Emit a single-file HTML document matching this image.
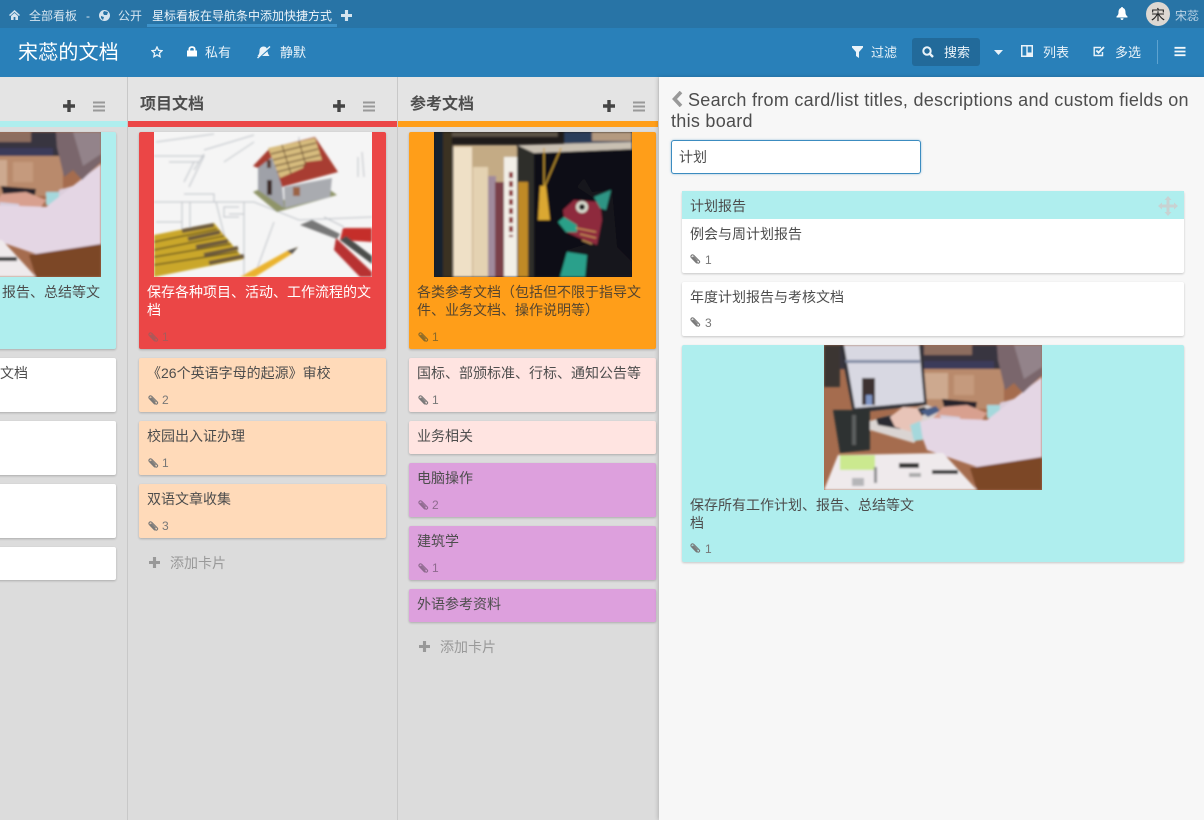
<!DOCTYPE html>
<html><head><meta charset="utf-8"><style>
*{box-sizing:border-box}
html,body{margin:0;padding:0;width:1204px;height:820px;overflow:hidden;background:#dcdcdc;font-family:"Liberation Sans","Noto Sans CJK SC",sans-serif;font-size:14px;color:#4d4d4d}
.a{position:absolute}
.t{position:absolute;white-space:nowrap}
.c{position:absolute;width:247px;border-radius:2px;box-shadow:0 1px 2px rgba(0,0,0,.22)}
.c .x{position:absolute;left:8px;top:6px;line-height:18px;font-size:14px;width:232px}
.c .b{position:absolute;left:8px;bottom:4px;font-size:12px;line-height:16px;color:#777;display:flex;align-items:center}
.b svg{margin-right:3px}
svg{display:block}
.w{color:#fff}
</style></head><body>
<svg width="0" height="0" style="position:absolute"><defs>
<filter id="bl" x="-5%" y="-5%" width="110%" height="110%"><feGaussianBlur stdDeviation="1"/></filter>
<symbol id="clip" viewBox="0 0 12 12"><path d="M7.800 10.200 2.400 4.600C1 3 3.200.9 4.800 2.400L10.300 8C11.300 9.200 9.600 10.900 8.400 9.800L3.900 5C3.300 4.400 4.100 3.600 4.800 4.200L8.600 8.200" fill="none" stroke="currentColor" stroke-width="1.100"/></symbol>
<symbol id="plus" viewBox="0 0 12 12"><path d="M4.300 0h3.400v4.300H12v3.400H7.700V12H4.300V7.700H0V4.300h4.300z" fill="currentColor"/></symbol>
<symbol id="bars" viewBox="0 0 12 12"><path d="M0 1h12v2H0zM0 5h12v2H0zM0 9h12v2H0z" fill="currentColor"/></symbol>
<symbol id="lap" viewBox="0 0 218 145">
<rect width="218" height="145" fill="#a56c4e"/>
<g filter="url(#bl)">
<rect x="96" y="24" width="84" height="40" fill="#b98a6c"/>
<rect x="100" y="28" width="24" height="26" fill="#cda98f"/>
<rect x="130" y="30" width="20" height="20" fill="#c59a7d"/>
<rect x="0" y="0" width="218" height="24" fill="#37343f"/>
<rect x="100" y="0" width="48" height="10" fill="#8d6d5e"/>
<rect x="100" y="16" width="70" height="8" fill="#3a3a5a"/>
<rect x="0" y="0" width="16" height="42" fill="#3b3533"/>
<path d="M16 0H98L103 60 29 68Z" fill="#333238"/>
<path d="M20 0H95L100 57 31 63Z" fill="#d8d8e2"/>
<path d="M21 15H96V18H22Z" fill="#8089a3"/>
<rect x="38" y="33" width="13" height="27" fill="#3c3033"/>
<rect x="42" y="50" width="6" height="10" fill="#7f94c5"/>
<path d="M46 76 103 60 118 66 90 98 46 85Z" fill="#dad4d2"/>
<path d="M52 74 100 62 106 66 76 84 54 80Z" fill="#2c2a30"/>
<path d="M96 66 112 61 116 66 104 72Z" fill="#4c5e88"/>
<path d="M118 54 153 57 152 63 120 62Z" fill="#26232a"/>
<path d="M66 72 79 62 93 63 99 73 88 87 71 82Z" fill="#e8c4b8"/>
<path d="M176 58 203 50 218 40V60L176 72Z" fill="#dccedc"/>
<rect x="163" y="60" width="13" height="13" fill="#a5d8dc"/>
<path d="M109 73 119 62 143 60 163 68 156 78 136 78Z" fill="#d8a08f"/>
<path d="M116 70 136 72 136 77 118 78Z" fill="#d5cddc"/>
<path d="M93 78 109 73 163 75 218 32V112L156 123 103 105Z" fill="#e4d6e4"/>
<path d="M86 80 96 76 99 95 90 96Z" fill="#a5d8dc"/>
<path d="M173 0H218V30L199 48 190 38 181 45 174 15Z" fill="#7a666c"/>
<path d="M190 0H218V22L200 34Z" fill="#93838a"/>
<path d="M9 65H38L46 63 46 105 16 108Z" fill="#2f3031"/>
<rect x="28" y="70" width="4" height="30" fill="#5b5f5e"/>
<path d="M146 123 218 112V145H153Z" fill="#7c4628"/>
<path d="M14 110 119 108 153 145H0Z" fill="#efeaec"/>
<rect x="16" y="110" width="35" height="15" fill="#cbe98f"/>
<rect x="75" y="118" width="20" height="5" fill="#333"/>
<rect x="108" y="125" width="26" height="4" fill="#333"/>
<rect x="28" y="133" width="12" height="8" fill="#b5b5b8"/>
<rect x="50" y="122" width="3" height="16" fill="#8d8d90"/>
<rect x="85" y="128" width="12" height="4" fill="#aaa"/>
</g></symbol>
</defs></svg>

<!-- top bar -->
<div class="a" style="left:0;top:0;width:1204px;height:28px;background:#2874a6"></div>
<div class="a" style="left:0;top:28px;width:1204px;height:49px;background:#2980b9"></div>
<svg class="a" style="left:9px;top:10px" width="11" height="10" viewBox="0 0 11 10"><path d="M5.500 0 11 5 10 6 5.500 2 1 6 0 5ZM2 6 5.500 3 9 6V10H6.400V7H4.600V10H2Z" fill="#d5e4ef"/></svg>
<div class="t" style="left:29px;top:8px;font-size:12px;line-height:16px;color:#d5e4ef">全部看板</div>
<div class="t" style="left:86px;top:8px;font-size:12px;line-height:16px;color:#d5e4ef">-</div>
<svg class="a" style="left:99px;top:10px" width="11" height="11" viewBox="0 0 11 11"><circle cx="5.500" cy="5.500" r="5.500" fill="#d5e4ef"/><path d="M5 1 9 2 8 5 5 5 4 3ZM2 6 5 7 4 10 2 8Z" fill="#2874a6"/></svg>
<div class="t" style="left:118px;top:8px;font-size:12px;line-height:16px;color:#d5e4ef">公开</div>
<div class="t" style="left:152px;top:8px;font-size:12px;line-height:16px;color:#eef5fa">星标看板在导航条中添加快捷方式</div>
<div class="a" style="left:147px;top:24px;width:190px;height:3px;background:#3d92c9"></div>
<svg class="a" style="left:341px;top:10px;color:#d5e4ef" width="11" height="11"><use href="#plus"/></svg>
<svg class="a" style="left:1116px;top:7px" width="12" height="13" viewBox="0 0 12 13"><path d="M6 0C7 0 7 1 7 1 9 1.500 9.500 3.500 9.500 5.500 9.500 8 11 9 11.500 9.500V10.500H.5V9.500C1 9 2.500 8 2.500 5.500 2.500 3.500 3 1.500 5 1 5 1 5 0 6 0ZM4.500 11.200H7.500C7.500 12.200 6.800 13 6 13S4.500 12.200 4.500 11.200Z" fill="#fff"/></svg>
<div class="a" style="left:1146px;top:2px;width:24px;height:24px;border-radius:50%;background:#ddd8d2"></div>
<div class="t" style="left:1150px;top:6px;width:16px;text-align:center;font-size:14px;line-height:18px;color:#222">宋</div>
<div class="t" style="left:1175px;top:8px;font-size:12px;line-height:16px;color:#bcd4e6">宋蕊</div>

<!-- header -->
<div class="t" style="left:18px;top:40px;font-size:20px;line-height:26px;color:#fff;letter-spacing:.2px">宋蕊的文档</div>
<svg class="a" style="left:151px;top:46px" width="12" height="12" viewBox="0 0 12 12"><path d="M6 1 7.500 4.300 11 4.700 8.400 7.100 9.100 10.700 6 8.900 2.900 10.700 3.600 7.100 1 4.700 4.500 4.300Z" fill="none" stroke="#eaf3f9" stroke-width="1.300"/></svg>
<svg class="a" style="left:187px;top:46px" width="10" height="11" viewBox="0 0 10 11"><path d="M0 4.500H1.500V3C1.500-.6 8.500-.6 8.500 3V4.500H10V10.500H0ZM3.200 4.500H6.800V3.100C6.800 1.400 3.200 1.400 3.200 3.100Z" fill="#fff" fill-rule="evenodd"/></svg>
<div class="t" style="left:205px;top:44px;font-size:13px;line-height:18px;color:#eaf3f9">私有</div>
<svg class="a" style="left:256px;top:45px" width="15" height="14" viewBox="0 0 15 14"><path d="M7.500 1.500C10 1.500 11 3 11 5L4 11H1.500C3 9.500 3.500 8 3.500 5.500 3.500 3 5.500 1.500 7.500 1.500ZM11.500 6.200C11.700 8 12.300 9.500 13.500 11H6ZM13.500 1 14.500 2 2 13.500 1 12.500Z" fill="#eaf3f9"/></svg>
<div class="t" style="left:280px;top:44px;font-size:13px;line-height:18px;color:#eaf3f9">静默</div>

<svg class="a" style="left:852px;top:46px" width="11" height="12" viewBox="0 0 11 12"><path d="M0 0H11V1.500L7 6V12L4 10V6L0 1.500Z" fill="#eaf3f9"/></svg>
<div class="t" style="left:871px;top:44px;font-size:13px;line-height:18px;color:#eaf3f9">过滤</div>
<div class="a" style="left:912px;top:38px;width:68px;height:28px;border-radius:3px;background:#226a9a"></div>
<svg class="a" style="left:922px;top:46px" width="12" height="12" viewBox="0 0 12 12"><circle cx="5" cy="5" r="3.700" fill="none" stroke="#eaf3f9" stroke-width="2"/><path d="M7.500 7.500 11 11" stroke="#eaf3f9" stroke-width="2.400"/></svg>
<div class="t" style="left:944px;top:44px;font-size:13px;line-height:18px;color:#eaf3f9">搜索</div>
<svg class="a" style="left:994px;top:50px" width="9" height="5" viewBox="0 0 9 5"><path d="M0 0H9L4.500 5Z" fill="#eaf3f9"/></svg>
<svg class="a" style="left:1021px;top:45px" width="12" height="12" viewBox="0 0 12 12"><path d="M0 0H12V12H0ZM1.500 1.500V10.500H5.300V1.500ZM6.700 1.500V7.500H10.500V1.500Z" fill="#eaf3f9" fill-rule="evenodd"/></svg>
<div class="t" style="left:1043px;top:44px;font-size:13px;line-height:18px;color:#eaf3f9">列表</div>
<svg class="a" style="left:1093px;top:46px" width="12" height="11" viewBox="0 0 12 11"><path d="M9.500 6V9.500H1.200V1.500H8" fill="none" stroke="#eaf3f9" stroke-width="1.400"/><path d="M3.300 4.500 5.500 6.700 11 1" fill="none" stroke="#eaf3f9" stroke-width="1.900"/></svg>
<div class="t" style="left:1115px;top:44px;font-size:13px;line-height:18px;color:#eaf3f9">多选</div>
<div class="a" style="left:1157px;top:40px;width:1px;height:24px;background:#5ea3d0"></div>
<svg class="a" style="left:1174px;top:46px;color:#f3f8fb" width="12" height="11"><use href="#bars"/></svg>

<!-- lists backgrounds -->
<div class="a" style="left:0;top:77px;width:658px;height:44px;background:#e4e4e4"></div>
<div class="a" style="left:127px;top:77px;width:1px;height:743px;background:#c8c8c8"></div>
<div class="a" style="left:397px;top:77px;width:1px;height:743px;background:#c8c8c8"></div>
<div class="a" style="left:0;top:121px;width:127px;height:6px;background:#afeeee"></div>
<div class="a" style="left:128px;top:121px;width:269px;height:6px;background:#eb4646"></div>
<div class="a" style="left:398px;top:121px;width:260px;height:6px;background:#ff9e19"></div>

<div class="t" style="left:140px;top:94px;font-size:16px;line-height:22px;font-weight:bold;color:#4d4d4d">项目文档</div>
<div class="t" style="left:410px;top:94px;font-size:16px;line-height:22px;font-weight:bold;color:#4d4d4d">参考文档</div>
<svg class="a" style="left:63px;top:100px;color:#444" width="12" height="12"><use href="#plus"/></svg>
<svg class="a" style="left:93px;top:100px;color:#999" width="12" height="13"><use href="#bars"/></svg>
<svg class="a" style="left:333px;top:100px;color:#444" width="12" height="12"><use href="#plus"/></svg>
<svg class="a" style="left:363px;top:100px;color:#999" width="12" height="13"><use href="#bars"/></svg>
<svg class="a" style="left:603px;top:100px;color:#444" width="12" height="12"><use href="#plus"/></svg>
<svg class="a" style="left:633px;top:100px;color:#999" width="12" height="13"><use href="#bars"/></svg>

<!-- list 1 -->
<div class="a" style="left:0;top:127px;width:127px;height:693px;overflow:hidden">
<div class="c" style="left:-131px;top:5px;height:217px;background:#afeeee"></div>
<svg class="a" style="left:-117px;top:5px" width="218" height="145"><use href="#lap"/></svg>
<div class="t" style="left:2px;top:156px;line-height:18px">报告、总结等文</div>
<div class="c" style="left:-131px;top:231px;height:54px;background:#fff"></div>
<div class="t" style="left:0;top:237px;line-height:18px">文档</div>
<div class="c" style="left:-131px;top:294px;height:54px;background:#fff"></div>
<div class="c" style="left:-131px;top:357px;height:54px;background:#fff"></div>
<div class="c" style="left:-131px;top:420px;height:33px;background:#fff"></div>
</div>

<!-- list 2 -->
<div class="c" style="left:139px;top:132px;height:217px;background:#eb4646">
<svg class="a" style="left:15px;top:0" width="218" height="145" viewBox="0 0 218 145">
<rect width="218" height="145" fill="#f5f5f5"/>
<g filter="url(#bl)">
<g fill="none" stroke="#bfc3c8" stroke-width="1">
<path d="M0 24H50L35 55M0 70H100L145 88 218 85M30 62H60V70M28 70V122M36 70V115M62 70 75 122M75 82H90M90 70V145M120 90 100 145M2 10 60 2M50 18 100 3M70 30 100 10M204 25V45M208 20 210 45M2 90H28M170 85 190 95"/>
<path d="M40 30 30 50M50 22 40 38M15 30H45M145 5V25M85 75H70V85H85"/>
</g>
<path d="M99 60 123 80 183 63 176 58 130 68 108 56Z" fill="#8f9468"/>
<path d="M104 35 116 18 128 53 130 76 104 58Z" fill="#9fa1a8"/>
<path d="M130 55 178 46 176 65 131 76Z" fill="#a9abb0"/>
<path d="M99 34 116 16 118 25 104 36Z" fill="#a83e32"/>
<path d="M116 16 161 5 184 40 128 55Z" fill="#a83e32"/>
<path d="M114 16 161 6 168 28 151 30 149 36 126 46Z" fill="#d7bc7e"/>
<path d="M117 22 162 11M119 28 164 17M121 34 166 23M123 40 150 33" stroke="#6f5536" stroke-width="1.300"/>
<path d="M128 13 137 42M145 9 152 34" stroke="#6f5536"/>
<rect x="113" y="28" width="4" height="8" fill="#5a3d35"/><rect x="113" y="48" width="5" height="15" fill="#3c2b28"/>
<rect x="139" y="55" width="7" height="9" fill="#9b6345"/>
<path d="M0 103 60 91 90 127 0 145Z" fill="#caa72a"/>
<path d="M0 110 63 97M0 118 70 104M0 125 77 112M0 133 84 120" stroke="#4f4324" stroke-width="1.300"/>
<path d="M28 99 60 93M34 107 66 100M42 115 74 109M50 123 84 116M55 131 90 124" stroke="#6d5a3a" stroke-width="4"/>
<path d="M86 145 133 119 144 115 139 121 101 145Z" fill="#eab32f"/>
<path d="M133 119 144 115 138 122Z" fill="#555"/>
<path d="M146 93 158 88 186 102 183 107Z" fill="#777"/>
<path d="M189 96 218 96V110L186 108Z" fill="#c52f2c"/>
<path d="M182 106 218 140V145H206L180 118Z" fill="#b83030"/>
<path d="M186 108 218 132V124L192 104Z" fill="#4b4d4c"/>
</g></svg>
<div class="x w" style="top:151px;line-height:18px">保存各种项目、活动、工作流程的文档</div>
<div class="b" style="color:#a85a5a"><svg width="12" height="12"><use href="#clip"/></svg>1</div></div>

<div class="c" style="left:139px;top:358px;height:54px;background:#ffdab9"><div class="x">《26个英语字母的起源》审校</div><div class="b"><svg width="12" height="12"><use href="#clip"/></svg>2</div></div>
<div class="c" style="left:139px;top:421px;height:54px;background:#ffdab9"><div class="x">校园出入证办理</div><div class="b"><svg width="12" height="12"><use href="#clip"/></svg>1</div></div>
<div class="c" style="left:139px;top:484px;height:54px;background:#ffdab9"><div class="x">双语文章收集</div><div class="b"><svg width="12" height="12"><use href="#clip"/></svg>3</div></div>
<svg class="a" style="left:149px;top:557px;color:#999" width="11" height="11"><use href="#plus"/></svg>
<div class="t" style="left:170px;top:554px;line-height:18px;color:#999">添加卡片</div>

<!-- list 3 -->
<div class="c" style="left:409px;top:132px;height:217px;background:#ff9e19">
<svg class="a" style="left:25px;top:0" width="198" height="145" viewBox="0 0 198 145">
<rect width="198" height="145" fill="#1f1b1a"/>
<g filter="url(#bl)">
<rect x="130" width="68" height="12" fill="#2a3c5a"/><rect x="158" width="40" height="9" fill="#b49a80"/>
<rect x="14" width="110" height="5" fill="#5c5347"/>
<rect x="0" width="9" height="145" fill="#18202e"/>
<rect x="9" y="0" width="9" height="145" fill="#3a3020"/>
<rect x="19" y="13" width="64" height="132" fill="#c4ab85"/>
<rect x="19" y="15" width="19" height="130" fill="#efe0c6"/>
<rect x="39" y="35" width="15" height="110" fill="#e4d2b2"/>
<rect x="54" y="44" width="8" height="101" fill="#a08a9c"/>
<rect x="61" y="50" width="9" height="95" fill="#7a3f4a"/>
<rect x="70" y="25" width="13" height="120" fill="#f2efe7"/>
<path d="M77 40V105" stroke="#8e2b33" stroke-width="4" stroke-dasharray="6 3"/>
<rect x="83" y="15" width="115" height="130" fill="#0e0d12"/>
<rect x="83" y="15" width="17" height="130" fill="#2f2f2b"/>
<path d="M83 13 198 10V17L100 21Z" fill="#c9c0b2"/>
<rect x="84" y="50" width="10" height="95" fill="#c08a26"/>
<path d="M110 16V56L127 16" fill="none" stroke="#cfa030" stroke-width="1.200"/>
<path d="M104 88 106 54 112 54 116 88Z" fill="#dba832"/>
<path d="M143 55 150 46 158 60 178 58 183 115 198 130V145H127L133 118 160 110 166 70Z" fill="#17171d"/>
<path d="M129 78 140 68 166 70 168 88 163 113 150 108 132 100Z" fill="#8e2a3e"/>
<path d="M124 90 130 85 143 93 143 100 132 100Z" fill="#2aa088"/>
<circle cx="148" cy="75" r="6" fill="#d8dccf"/><circle cx="148" cy="75" r="3" fill="#121212"/>
<path d="M160 65 177 58 172 78 166 76Z" fill="#2f9584"/>
<path d="M133 120 153 123 151 145H126Z" fill="#2aa08b"/>
<path d="M142 96 162 100M146 102 162 106M148 108 158 112" stroke="#d8a85c"/>
</g></svg>
<div class="x" style="top:151px;line-height:18px;color:#55452f">各类参考文档（包括但不限于指导文件、业务文档、操作说明等）</div>
<div class="b" style="color:#8a6a2a"><svg width="12" height="12"><use href="#clip"/></svg>1</div></div>

<div class="c" style="left:409px;top:358px;height:54px;background:#ffe4e1"><div class="x">国标、部颁标准、行标、通知公告等</div><div class="b"><svg width="12" height="12"><use href="#clip"/></svg>1</div></div>
<div class="c" style="left:409px;top:421px;height:33px;background:#ffe4e1"><div class="x">业务相关</div></div>
<div class="c" style="left:409px;top:463px;height:54px;background:#dda0dd"><div class="x">电脑操作</div><div class="b" style="color:#8e6a8e"><svg width="12" height="12"><use href="#clip"/></svg>2</div></div>
<div class="c" style="left:409px;top:526px;height:54px;background:#dda0dd"><div class="x">建筑学</div><div class="b" style="color:#8e6a8e"><svg width="12" height="12"><use href="#clip"/></svg>1</div></div>
<div class="c" style="left:409px;top:589px;height:33px;background:#dda0dd"><div class="x">外语参考资料</div></div>
<svg class="a" style="left:419px;top:641px;color:#999" width="11" height="11"><use href="#plus"/></svg>
<div class="t" style="left:440px;top:638px;line-height:18px;color:#999">添加卡片</div>

<!-- sidebar -->
<div class="a" style="left:659px;top:77px;width:545px;height:743px;background:#f7f7f7;box-shadow:-1px 0 4px rgba(0,0,0,.18)"></div>
<svg class="a" style="left:672px;top:91px" width="12" height="16" viewBox="0 0 12 16"><path d="M9 1 2.500 8 9 15" fill="none" stroke="#999" stroke-width="3.600"/></svg>
<div class="a" style="left:671px;top:90px;width:525px;font-size:18px;line-height:21px;color:#4d4d4d;text-indent:17px;letter-spacing:.28px">Search from card/list titles, descriptions and custom fields on this board</div>
<div class="a" style="left:671px;top:140px;width:250px;height:34px;background:#fff;border:1px solid #3c8cc0;border-radius:3px;box-shadow:0 0 2px rgba(60,140,192,.5)"></div>
<div class="t" style="left:679px;top:148px;line-height:18px;font-size:14px">计划</div>

<div class="a" style="left:682px;top:191px;width:502px;height:82px;background:#fff;border-radius:2px;box-shadow:0 1px 2px rgba(0,0,0,.2)"></div>
<div class="a" style="left:682px;top:191px;width:502px;height:28px;background:#afeeee"></div>
<div class="t" style="left:690px;top:197px;line-height:18px">计划报告</div>
<svg class="a" style="left:1158px;top:196px" width="20" height="20" viewBox="0 0 20 20"><path d="M10 0 13.500 4H11.500V8.500H16V6.500L20 10 16 13.500V11.500H11.500V16H13.500L10 20 6.500 16H8.500V11.500H4V13.500L0 10 4 6.500V8.500H8.500V4H6.500Z" fill="#c8d2d2"/></svg>
<div class="t" style="left:690px;top:225px;line-height:18px">例会与周计划报告</div>
<svg class="a" style="left:689px;top:253px;color:#777" width="12" height="12"><use href="#clip"/></svg>
<div class="t" style="left:705px;top:252px;font-size:12px;line-height:16px;color:#777">1</div>

<div class="a" style="left:682px;top:282px;width:502px;height:54px;background:#fff;border-radius:2px;box-shadow:0 1px 2px rgba(0,0,0,.2)"></div>
<div class="t" style="left:690px;top:288px;line-height:18px">年度计划报告与考核文档</div>
<svg class="a" style="left:689px;top:316px;color:#777" width="12" height="12"><use href="#clip"/></svg>
<div class="t" style="left:705px;top:315px;font-size:12px;line-height:16px;color:#777">3</div>

<div class="a" style="left:682px;top:345px;width:502px;height:217px;background:#afeeee;border-radius:2px;box-shadow:0 1px 2px rgba(0,0,0,.2)"></div>
<svg class="a" style="left:824px;top:345px" width="218" height="145"><use href="#lap"/></svg>
<div class="a" style="left:690px;top:496px;width:232px;line-height:18px">保存所有工作计划、报告、总结等文档</div>
<svg class="a" style="left:689px;top:542px;color:#777" width="12" height="12"><use href="#clip"/></svg>
<div class="t" style="left:705px;top:541px;font-size:12px;line-height:16px;color:#777">1</div>
</body></html>
